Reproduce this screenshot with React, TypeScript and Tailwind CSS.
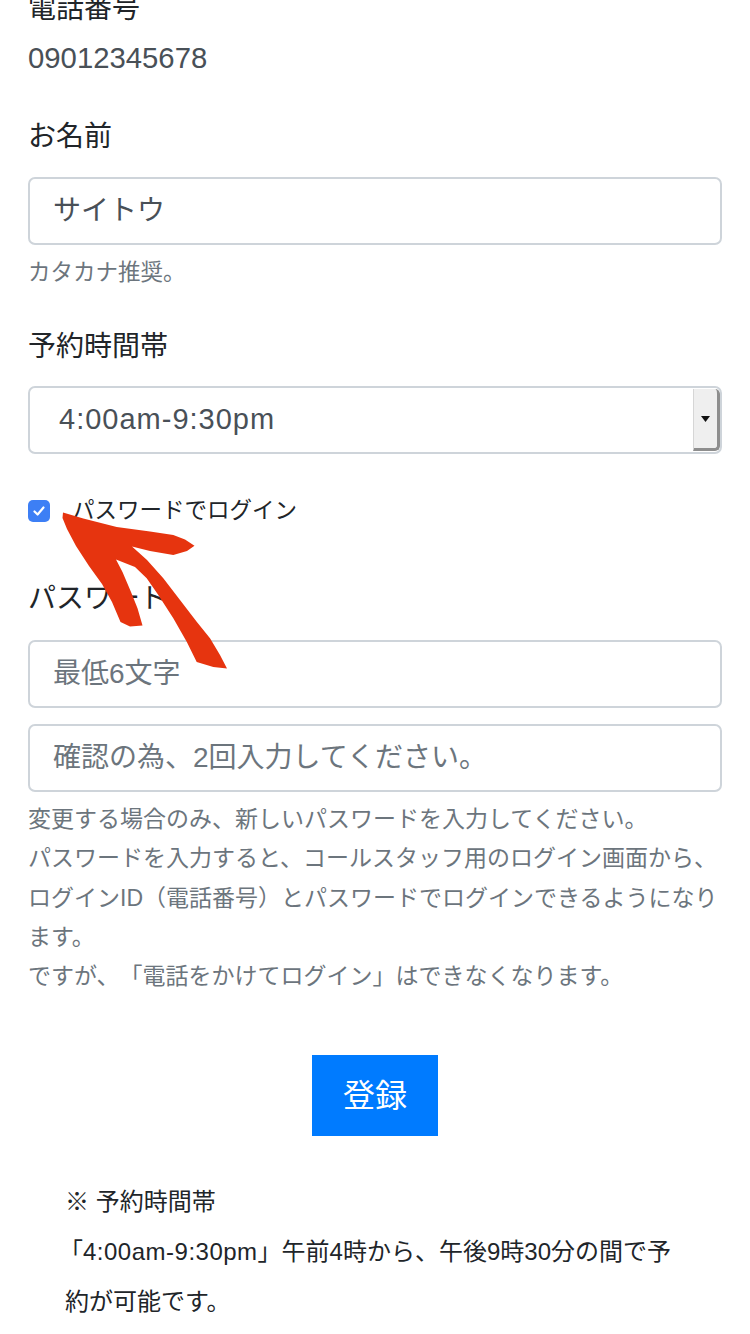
import React from "react";

function TextBox({ value, placeholder }: { value?: string; placeholder?: string }) {
  return (
    <div className="h-[68px] w-full rounded-[7px] border-2 border-[#ced4da] bg-white px-[23px] flex items-center">
      {value ? (
        <span className="text-[28px] text-[#495057]">{value}</span>
      ) : (
        <span className="text-[28px] text-[#6c757d]">{placeholder}</span>
      )}
    </div>
  );
}

function Arrow() {
  return (
    <svg
      className="pointer-events-none absolute left-0 top-0"
      width="750"
      height="1334"
      viewBox="0 0 750 1334"
    >
      <polygon
        fill="#e6340f"
        points="63,512.5 83.3,518.5 116.7,527 150,531.5 173.3,535 185,539.5 194.5,545.7 187,551 173.3,555 150,551 132,546.5 147,560 163.3,578.3 180,600 196.7,621.7 210,638.3 220,655 227,668.5 213.3,667 196.7,662 186.7,641.7 173.3,618.3 158.3,595 146.7,578.3 135,567 116,559.5 122.5,572 131,592 137.5,608.3 142.5,625.5 130,626.5 120.5,622 112,602 102,584 89,566 76,546 67,529 62.5,518"
      />
    </svg>
  );
}

export default function App() {
  return (
    <div className="relative h-[1334px] w-[750px] overflow-hidden bg-white font-['Liberation_Sans','Noto_Sans_CJK_JP',sans-serif] text-[#212529] [text-spacing-trim:space-all]">
      <div className="px-[28px] -mt-[12px]">
        <div className="text-[28px] leading-[42px]">電話番号</div>
        <div className="mt-[7px] text-[29.3px] leading-[42px] text-[#495057]">09012345678</div>

        <div className="mt-[37px] text-[28px] leading-[42px]">お名前</div>
        <div className="mt-[19px]">
          <TextBox value="サイトウ" />
        </div>
        <div className="mt-[11px] text-[22.5px] leading-[33px] text-[#6c757d]">カタカナ推奨。</div>

        <div className="mt-[37px] text-[28px] leading-[42px]">予約時間帯</div>
        <div className="mt-[18px] flex h-[68px] w-full overflow-hidden rounded-[7px] border-2 border-[#ced4da] bg-white">
          <div className="flex flex-1 items-center pl-[29px] text-[29px] tracking-[1px] text-[#495057]">4:00am-9:30pm</div>
          <div className="my-[1px] flex w-[27px] items-center justify-center rounded-tr-[5px] rounded-br-[5px] border-l border-[#d6d6d6] border-r-[3px] border-b-[3px] border-r-[#8e8e8e] border-b-[#8e8e8e] bg-[#efefef]">
            <svg width="9" height="6" viewBox="0 0 9 6">
              <polygon points="0,0 9,0 4.5,6" fill="#111" />
            </svg>
          </div>
        </div>

        <div className="mt-[40px] flex items-center">
          <div className="flex h-[22px] w-[22px] items-center justify-center rounded-[5px] bg-[#3d7ff5]">
            <svg width="14" height="14" viewBox="0 0 14 14">
              <path d="M2.5 7.5 L5.6 10.5 L11.5 3.5" stroke="#fff" strokeWidth="2.2" fill="none" strokeLinecap="round" strokeLinejoin="round" />
            </svg>
          </div>
          <span className="ml-[22px] text-[22.5px] leading-[33px]">パスワードでログイン</span>
        </div>

        <div className="mt-[51px] text-[28px] leading-[42px]">パスワード</div>
        <div className="mt-[20px]">
          <TextBox placeholder="最低6文字" />
        </div>
        <div className="mt-[16px]">
          <TextBox placeholder="確認の為、2回入力してください。" />
        </div>
        <div className="mt-[8px] whitespace-nowrap text-[23px] leading-[39.3px] text-[#6c757d]">
          <div>変更する場合のみ、新しいパスワードを入力してください。</div>
          <div>パスワードを入力すると、コールスタッフ用のログイン画面から、</div>
          <div>ログインID（電話番号）とパスワードでログインできるようになり</div>
          <div>ます。</div>
          <div>ですが、「電話をかけてログイン」はできなくなります。</div>
        </div>

        <div className="mt-[59px] flex justify-center">
          <button className="flex h-[81px] w-[126px] items-center justify-center bg-[#007bff] text-[32px] text-white">
            登録
          </button>
        </div>

        <div className="ml-[37px] mt-[41px] whitespace-nowrap text-[24px] leading-[50px]">
          <div>※ 予約時間帯</div>
          <div className="-ml-[6px]">
            「<span className="tracking-[0.5px]">4:00am-9:30pm</span>」午前4時から、午後9時30分の間で予
          </div>
          <div>約が可能です。</div>
        </div>
      </div>
      <Arrow />
    </div>
  );
}
